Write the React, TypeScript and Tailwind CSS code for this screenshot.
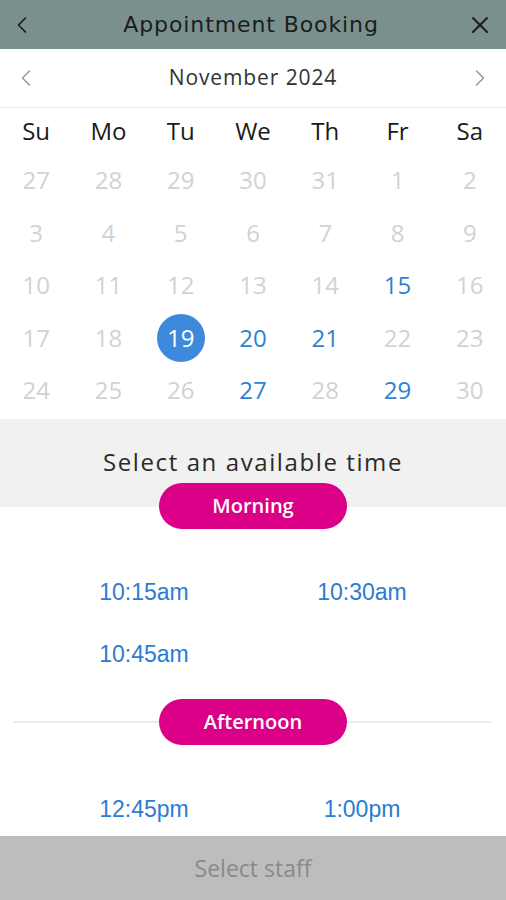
import { ChevronLeft, ChevronRight, X } from "lucide-react";

const weekdays = ["Su", "Mo", "Tu", "We", "Th", "Fr", "Sa"];

// 0 = muted, 1 = available, 2 = selected
const weeks: [number, number][][] = [
  [[27, 0], [28, 0], [29, 0], [30, 0], [31, 0], [1, 0], [2, 0]],
  [[3, 0], [4, 0], [5, 0], [6, 0], [7, 0], [8, 0], [9, 0]],
  [[10, 0], [11, 0], [12, 0], [13, 0], [14, 0], [15, 1], [16, 0]],
  [[17, 0], [18, 0], [19, 2], [20, 1], [21, 1], [22, 0], [23, 0]],
  [[24, 0], [25, 0], [26, 0], [27, 1], [28, 0], [29, 1], [30, 0]],
];

function DayCell({ day, state }: { day: number; state: number }) {
  if (state === 2) {
    return (
      <div className="flex h-[52.5px] items-center justify-center">
        <span className="flex h-12 w-12 items-center justify-center rounded-full bg-[#3d89dc] text-white">
          {day}
        </span>
      </div>
    );
  }
  return (
    <div
      className={`flex h-[52.5px] items-center justify-center ${
        state === 1 ? "text-[#2f7fd4]" : "text-[#d2d2d2]"
      }`}
    >
      {day}
    </div>
  );
}

function PeriodPill({ label }: { label: string }) {
  return (
    <div className="flex h-[46px] w-[188px] items-center justify-center rounded-full bg-[#db0087] text-[20px] font-semibold text-white">
      {label}
    </div>
  );
}

function TimeSlot({ time }: { time: string }) {
  return (
    <div className="flex h-[62px] items-center justify-center font-['Liberation_Sans',Arial,sans-serif] text-[23px] text-[#2b7cd3]">
      {time}
    </div>
  );
}

export default function App() {
  return (
    <div className="flex h-[900px] w-[506px] flex-col overflow-hidden bg-white font-['Open_Sans',sans-serif]">
      <header className="flex h-[49px] shrink-0 items-center justify-between bg-[#7a908f] pl-2 pr-3 text-[#1c1c1c]">
        <ChevronLeft className="h-7 w-7" strokeWidth={1.5} />
        <span className="font-['DejaVu_Sans',sans-serif] text-[22px] tracking-[0.9px]">
          Appointment Booking
        </span>
        <X className="h-7 w-7" strokeWidth={1.8} />
      </header>

      <div className="flex h-[59px] shrink-0 items-center justify-between border-b border-[#ececec] px-3 text-[#333]">
        <ChevronLeft className="h-7 w-7 text-[#999]" strokeWidth={1.3} />
        <span className="text-[21px] tracking-[0.9px]">November 2024</span>
        <ChevronRight className="h-7 w-7 text-[#999]" strokeWidth={1.3} />
      </div>

      <div className="grid shrink-0 grid-cols-7 text-[24px]">
        {weekdays.map((d) => (
          <div key={d} className="flex h-[46px] items-center justify-center text-[#1a1a1a]">
            {d}
          </div>
        ))}
        {weeks.flat().map(([day, state], i) => (
          <DayCell key={i} day={day} state={state} />
        ))}
      </div>

      <div className="relative mt-[2px] flex h-[88px] shrink-0 justify-center bg-[#f1f1f1] pt-[25px] text-[24px] tracking-[1.6px] text-[#2a2a2a]">
        Select an available time
      </div>

      <div className="relative z-10 mt-[-24px] flex justify-center">
        <PeriodPill label="Morning" />
      </div>

      <div className="mt-[33px] grid grid-cols-2 px-[35px]">
        <TimeSlot time="10:15am" />
        <TimeSlot time="10:30am" />
        <TimeSlot time="10:45am" />
      </div>

      <div className="mt-[13px] flex items-center px-[14px]">
        <div className="h-[2px] flex-1 bg-[#ececec]" />
        <PeriodPill label="Afternoon" />
        <div className="h-[2px] flex-1 bg-[#ececec]" />
      </div>

      <div className="mt-[34px] grid h-[56px] grid-cols-2 overflow-hidden px-[35px]">
        <TimeSlot time="12:45pm" />
        <TimeSlot time="1:00pm" />
      </div>

      <div className="mt-auto flex h-[64px] shrink-0 items-center justify-center bg-[#bdbdbd] text-[23px] text-[#8a8a8a]">
        Select staff
      </div>
    </div>
  );
}
